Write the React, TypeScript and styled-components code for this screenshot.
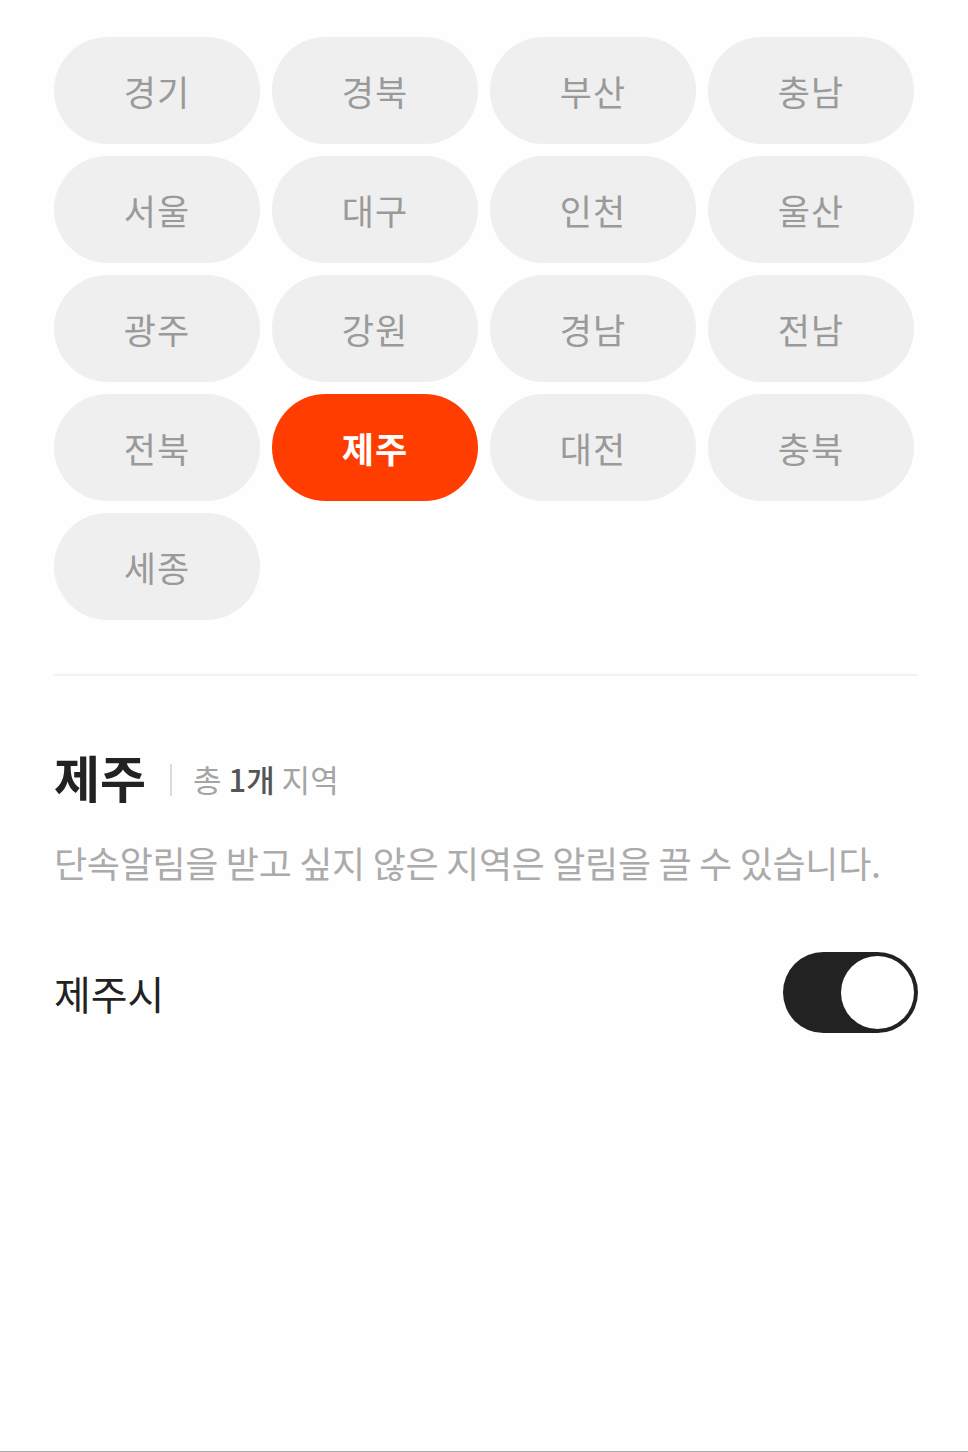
import styled, { createGlobalStyle } from "styled-components"

const GlobalStyle = createGlobalStyle`
    html, body {
        margin: 0;
        padding: 0;
        background: #ffffff;
    }
    body {
        font-family: "Noto Sans CJK KR", "Noto Sans", sans-serif;
    }
`

const Page = styled.div`
    box-sizing: border-box;
    height: 1452px;
    padding: 37px 54px 0 54px;
    border-bottom: 1px solid #a8a8a8;
    background: #fefefe;
`
const RegionGrid = styled.div`
    display: grid;
    grid-template-columns: repeat(4, 1fr);
    gap: 12px;
`
const RegionPill = styled.button<{ selected?: boolean }>`
    height: 107px;
    border: none;
    border-radius: 54px;
    background-color: ${props => props.selected ? '#ff3d00' : '#efefef'};
    color: ${props => props.selected ? '#ffffff' : '#9a9a9a'};
    font-family: inherit;
    font-size: 35px;
    font-weight: ${props => props.selected ? 700 : 400};
    letter-spacing: 1px;
    padding: 0;
    display: flex;
    align-items: center;
    justify-content: center;
`
const Divider = styled.hr`
    margin: 54px -4px 0 0;
    border: none;
    height: 2px;
    background: #f2f2f2;
`
const TitleRow = styled.div`
    display: flex;
    align-items: center;
    margin-top: 74px;
`
const Title = styled.h2`
    margin: 0;
    font-size: 50px;
    font-weight: 700;
    color: #222222;
    line-height: 1;
`
const Bar = styled.span`
    width: 2px;
    height: 32px;
    background: #dcdcdc;
    margin: 8px 21px 0 24px;
`
const Count = styled.span`
    font-size: 31px;
    color: #a4a4a4;
    margin-top: 6px;
    b {
        color: #555555;
        font-weight: 500;
    }
`
const Description = styled.p`
    margin: 40px 0 0 0;
    font-size: 36px;
    color: #ababab;
    line-height: 1.2;
    letter-spacing: -0.3px;
    white-space: nowrap;
`
const SettingRow = styled.div`
    display: flex;
    align-items: center;
    justify-content: space-between;
    margin-top: 68px;
    margin-right: -4px;
`
const SettingLabel = styled.span`
    font-size: 40px;
    color: #222222;
`
const Toggle = styled.div<{ on?: boolean }>`
    box-sizing: border-box;
    width: 135px;
    height: 81px;
    border-radius: 41px;
    background: ${props => props.on ? '#222222' : '#dddddd'};
    padding: 4px;
    display: flex;
    justify-content: ${props => props.on ? 'flex-end' : 'flex-start'};
`
const Knob = styled.div`
    width: 73px;
    height: 73px;
    border-radius: 50%;
    background: #ffffff;
`

const regions = ['경기', '경북', '부산', '충남', '서울', '대구', '인천', '울산', '광주', '강원', '경남', '전남', '전북', '제주', '대전', '충북', '세종']

export default function App() {
    const selected = '제주'

    return (
        <>
            <GlobalStyle />
            <Page>
                <RegionGrid>
                    {regions.map(name => (
                        <RegionPill key={name} selected={name === selected}>{name}</RegionPill>
                    ))}
                </RegionGrid>
                <Divider />
                <TitleRow>
                    <Title>{selected}</Title>
                    <Bar />
                    <Count>총 <b>1개</b> 지역</Count>
                </TitleRow>
                <Description>단속알림을 받고 싶지 않은 지역은 알림을 끌 수 있습니다.</Description>
                <SettingRow>
                    <SettingLabel>제주시</SettingLabel>
                    <Toggle on>
                        <Knob />
                    </Toggle>
                </SettingRow>
            </Page>
        </>
    )
}
